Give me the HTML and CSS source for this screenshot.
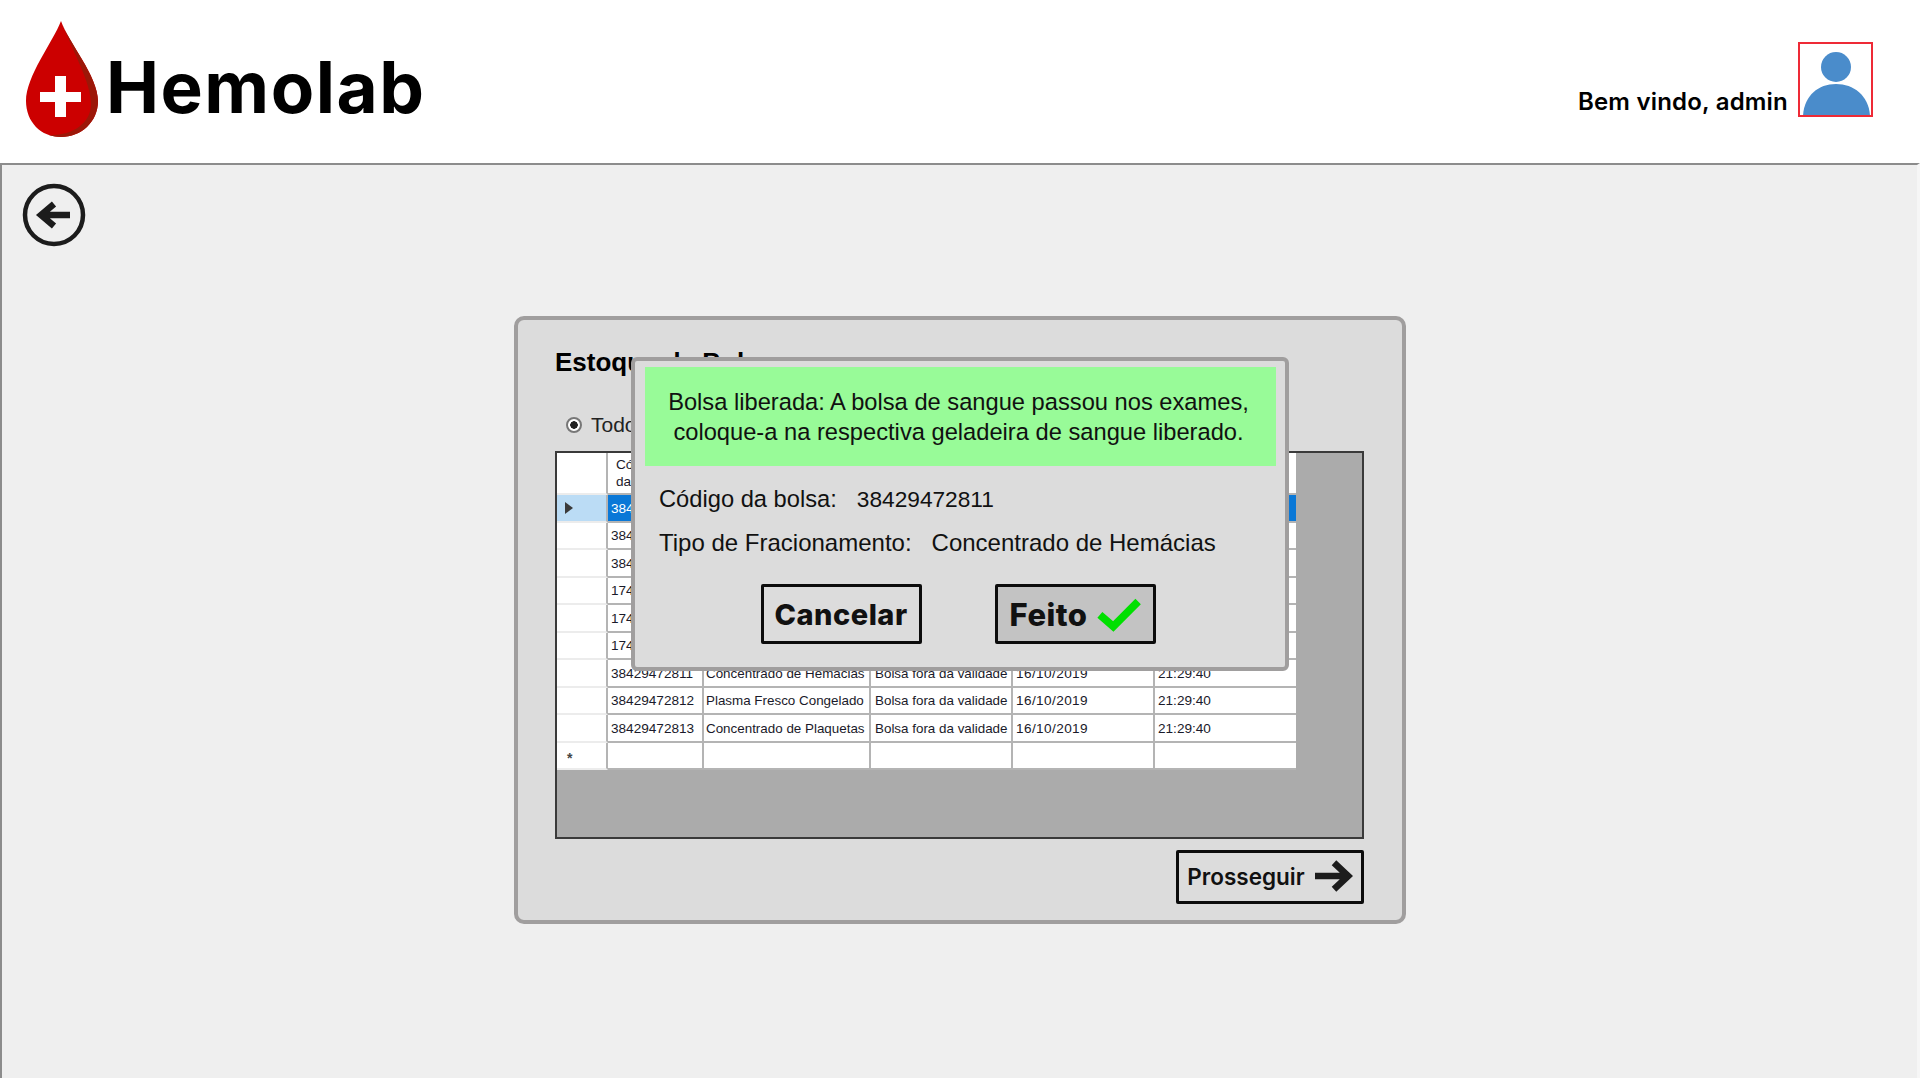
FILE: index.html
```html
<!DOCTYPE html>
<html lang="en">
<head>
  <meta charset="UTF-8" />
  <title>Hemolab - Estoque de Bolsas</title>
  <link rel="stylesheet" href="styles.css">
</head>
<body>
  <!-- Top bar -->
  <header class="topbar">
    <div class="brand">
      <svg class="brand-drop" width="76" height="118" viewBox="0 0 76 118">
        <path d="M36 1 C28 22 1 56 1 81 C1 102 16 117 36 117 C56 117 73 102 73 81 C73 56 43 22 36 1 Z" fill="#cc0000"/>
        <path d="M36 1 C43 22 73 56 73 81 C73 102 56 117 36 117 C32 117 28 116 24 115 C46 116 66 104 66 84 C66 62 47 30 36 1 Z" fill="#9c1708"/>
        <path d="M30 56 H41 V72 H56 V82 H41 V97 H30 V82 H15 V72 H30 Z" fill="#fff"/>
      </svg>
      <span class="brand-name">Hemolab</span>
    </div>
    <div class="user">
      <span class="user-name">Bem vindo, admin</span>
      <div class="user-photo">
        <svg width="71" height="71" viewBox="0 0 71 71">
          <circle cx="36" cy="23" r="15" fill="#4a8ccb"/>
          <path d="M3 72 C4 52 18 40 36 40 C54 40 69 52 70 72 Z" fill="#4a8ccb"/>
        </svg>
      </div>
    </div>
  </header>

  <main class="content">
    <button class="back-btn" aria-label="Voltar">
      <svg width="64" height="64" viewBox="0 0 64 64">
        <circle cx="32" cy="32" r="29" fill="none" stroke="#1c1c1c" stroke-width="4.5"/>
        <path d="M48 32 H20 M32 21 L19 32 L32 43" fill="none" stroke="#1c1c1c" stroke-width="6.5"/>
      </svg>
    </button>

    <section class="panel">
      <h2 class="panel-title">Estoque de Bolsas</h2>
      <label class="radio-row"><span class="radio"></span>Todos</label>

      <div class="grid-box">
        <table class="grid">
          <tr class="grid-head">
            <th class="row-head"></th>
            <th>Código<br>da bolsa</th>
            <th></th>
            <th></th>
            <th></th>
            <th></th>
          </tr>
          <tr class="selected">
            <td class="row-head"><span class="arrow"></span></td>
            <td class="sel-cell">384</td><td class="sel-cell"></td><td class="sel-cell"></td><td class="sel-cell"></td><td class="sel-cell"></td>
          </tr>
          <tr><td class="row-head"></td><td>384</td><td></td><td></td><td></td><td></td></tr>
          <tr><td class="row-head"></td><td>384</td><td></td><td></td><td></td><td></td></tr>
          <tr><td class="row-head"></td><td>174</td><td></td><td></td><td></td><td></td></tr>
          <tr><td class="row-head"></td><td>174</td><td></td><td></td><td></td><td></td></tr>
          <tr><td class="row-head"></td><td>174</td><td></td><td></td><td></td><td></td></tr>
          <tr><td class="row-head"></td><td>38429472811</td><td>Concentrado de Hemácias</td><td>Bolsa fora da validade</td><td>16/10/2019</td><td>21:29:40</td></tr>
          <tr><td class="row-head"></td><td>38429472812</td><td>Plasma Fresco Congelado</td><td>Bolsa fora da validade</td><td>16/10/2019</td><td>21:29:40</td></tr>
          <tr><td class="row-head"></td><td>38429472813</td><td>Concentrado de Plaquetas</td><td>Bolsa fora da validade</td><td>16/10/2019</td><td>21:29:40</td></tr>
          <tr><td class="row-head star">*</td><td></td><td></td><td></td><td></td><td></td></tr>
        </table>
      </div>

      <div class="panel-actions">
        <button class="btn btn-next">Prosseguir
          <svg width="38" height="34" viewBox="0 0 40 34">
            <path d="M0 17 H34 M20 3 L35 17 L20 31" fill="none" stroke="#1c1c1c" stroke-width="7"/>
          </svg>
        </button>
      </div>

      <!-- Modal -->
      <div class="modal">
        <div class="modal-msg">Bolsa liberada: A bolsa de sangue passou nos exames,<br>coloque-a na respectiva geladeira de sangue liberado.</div>
        <p class="modal-line"><span>Código da bolsa:</span><span class="modal-num">38429472811</span></p>
        <p class="modal-line modal-line-wide"><span>Tipo de Fracionamento:</span><span>Concentrado de Hemácias</span></p>
        <div class="modal-actions">
          <button class="btn btn-modal">Cancelar</button>
          <button class="btn btn-modal btn-done">Feito
            <svg width="44" height="36" viewBox="0 0 46 36">
              <path d="M3 19 L17 31 L43 5" fill="none" stroke="#00e000" stroke-width="8"/>
            </svg>
          </button>
        </div>
      </div>
    </section>
  </main>
</body>
</html>
```

FILE: styles.css
```css
html, body {
  height: 100%;
}
body {
  margin: 0;
  background-color: #fff;
  color: #000;
  font-family: "Liberation Sans", Arial, sans-serif;
  overflow: hidden;
}
button {
  font-family: inherit;
  cursor: pointer;
}

/* top bar */
.topbar {
  height: 163px;
  display: flex;
  justify-content: space-between;
  padding: 20px 47px 0 25px;
  box-sizing: border-box;
}
.brand {
  display: flex;
  align-items: flex-start;
}
.brand-drop {
  flex: none;
}
.brand-name {
  font-family: Inter, sans-serif;
  font-weight: 700;
  font-size: 71px;
  line-height: 76px;
  margin: 29px 0 0 5px;
  letter-spacing: 1.5px;
}
.user {
  display: flex;
  align-items: flex-end;
  gap: 10px;
  height: 97px;
}
.user-name {
  font-family: Inter, sans-serif;
  font-weight: 600;
  font-size: 24px;
  line-height: 30px;
  letter-spacing: 0.2px;
}
.user-photo {
  width: 75px;
  height: 75px;
  box-sizing: border-box;
  border: 2px solid #ee2a36;
  overflow: hidden;
}
.user-photo svg {
  display: block;
}

/* main area */
.content {
  height: 915px;
  box-sizing: border-box;
  background-color: #efefef;
  border-top: 2px solid #8c8c8c;
  border-left: 2px solid #8c8c8c;
  border-right: 3px solid #f6f6f6;
  position: relative;
  padding: 18px 0 0 20px;
}
.back-btn {
  display: block;
  padding: 0;
  border: none;
  background: none;
  width: 64px;
  height: 64px;
}

/* panel */
.panel {
  position: relative;
  width: 892px;
  height: 608px;
  box-sizing: border-box;
  margin: 69px 0 0 492px;
  padding: 26px 38px 0 37px;
  background-color: #dcdcdc;
  border: 4px solid #a09e9e;
  border-radius: 10px;
}
.panel-title {
  margin: 0;
  font-size: 26px;
  line-height: 32px;
  font-weight: 700;
}
.radio-row {
  display: flex;
  align-items: center;
  gap: 9px;
  margin: 34px 0 0 11px;
  height: 26px;
  font-size: 21px;
  color: #222;
}
.radio {
  width: 12px;
  height: 12px;
  border: 2px solid #777;
  border-radius: 50%;
  background: radial-gradient(circle, #222 0 3.5px, #fff 4px);
  flex: none;
}

/* data grid */
.grid-box {
  margin-top: 13px;
  height: 388px;
  box-sizing: border-box;
  background-color: #ababab;
  border: 2px solid #3a3a3a;
}
.grid {
  border-collapse: separate;
  border-spacing: 0;
  table-layout: fixed;
  width: 739px;
  background-color: #fff;
  font-size: 13.6px;
  color: #1a1a2a;
}
.grid th, .grid td {
  border: 0 solid #b4b4b4;
  border-width: 0 2px 2px 0;
  padding: 0 3px;
  height: 27px;
  box-sizing: border-box;
  text-align: left;
  white-space: nowrap;
  overflow: hidden;
  font-weight: 400;
}
.grid tr:nth-child(even) td {
  height: 28px;
}
.grid tr > :nth-child(1) { width: 51px; border-bottom-color: #ececec; }
.grid tr > :nth-child(2) { width: 96px; }
.grid tr > :nth-child(3) { width: 167px; font-size: 13.4px; padding-left: 2px; }
.grid tr > :nth-child(4) { width: 142px; font-size: 13.4px; padding-left: 4px; }
.grid tr > :nth-child(5) { width: 142px; letter-spacing: 0.4px; }
.grid tr > :nth-child(6) { width: 141px; border-right: none; }
.grid .grid-head th {
  height: 42px;
  line-height: 17px;
  padding-left: 8px;
}
.grid .selected .row-head {
  background-color: #bbdcf5;
}
.grid .sel-cell {
  background-color: #0a78d7;
  color: #fff;
}
.arrow {
  display: block;
  width: 0;
  height: 0;
  margin-left: 5px;
  border-left: 8px solid #3a3a3a;
  border-top: 6px solid transparent;
  border-bottom: 6px solid transparent;
}
.grid .star {
  font-weight: 700;
  font-size: 14px;
  padding: 5px 0 0 10px;
  color: #444;
}

.panel-actions {
  display: flex;
  justify-content: flex-end;
  margin-top: 11px;
}

/* buttons */
.btn {
  display: flex;
  align-items: center;
  justify-content: center;
  background-color: transparent;
  border: 3px solid #0c0c0c;
  border-radius: 2px;
  font-family: Inter, sans-serif;
  font-weight: 600;
  color: #111;
  padding: 0;
}
.btn-next {
  width: 188px;
  height: 54px;
  gap: 10px;
  font-size: 22.5px;
  padding-bottom: 2px;
}
.btn-modal {
  width: 161px;
  height: 60px;
  font-size: 29px;
  font-weight: 800;
  letter-spacing: 0.5px;
}
.btn-done {
  background-color: #c3c3c3;
  font-size: 31px;
  gap: 9px;
}

/* modal */
.modal {
  position: absolute;
  left: 113px;
  top: 37px;
  width: 658px;
  height: 314px;
  box-sizing: border-box;
  padding: 6px 9px 0 10px;
  background-color: #dcdcdc;
  border: 4px solid #a09e9e;
  border-radius: 6px;
  color: #111;
}
.modal-msg {
  height: 99px;
  background-color: #98fb98;
  font-size: 23.7px;
  line-height: 30px;
  text-align: center;
  padding: 20px 4px 0 0;
  box-sizing: border-box;
}
.modal-line {
  display: flex;
  gap: 20px;
  margin: 0;
  height: 43px;
  align-items: center;
  font-size: 23.7px;
  padding-left: 14px;
}
.modal-line-wide {
  font-size: 24px;
}
.modal-num {
  font-size: 22.7px;
}
.modal-msg + .modal-line {
  margin-top: 12px;
}
.modal-actions {
  display: flex;
  justify-content: center;
  gap: 73px;
  margin-top: 20px;
  padding-right: 5px;
}
```
